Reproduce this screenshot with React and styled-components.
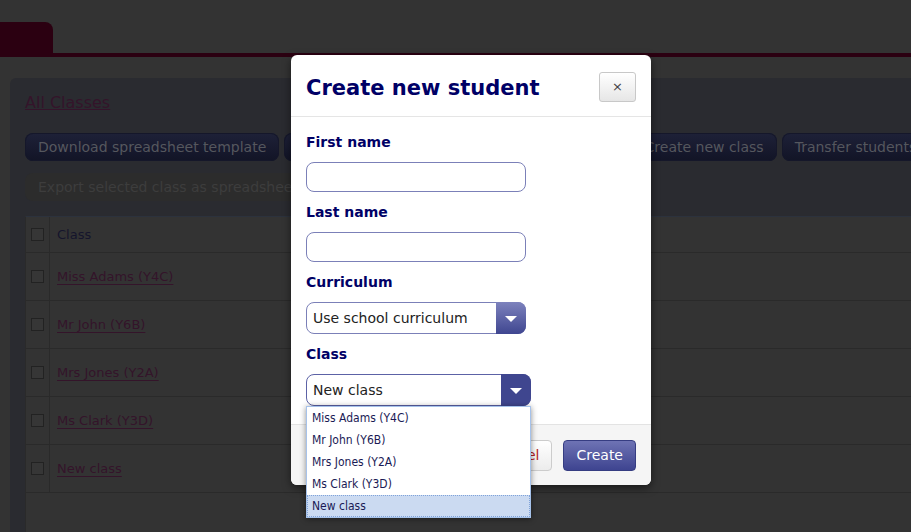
import React from "react";
import styled, { createGlobalStyle } from "styled-components";

const GlobalStyle = createGlobalStyle`
  html, body { margin: 0; padding: 0; }
  body {
    background: #333333;
    overflow: hidden;
    font-family: "DejaVu Sans", Verdana, sans-serif;
    width: 911px;
    height: 532px;
  }
  * { box-sizing: border-box; }
`;

const Page = styled.div`
  position: relative;
  width: 911px;
  height: 532px;
  overflow: hidden;
`;

const TopBar = styled.div`
  height: 57px;
  padding-top: 22px;
  border-bottom: 4px solid #2b0011;
  display: flex;
  align-items: flex-end;
`;

const Tab = styled.div`
  width: 53px;
  height: 31px;
  background: #2b0011;
  border-radius: 0 8px 0 0;
`;

const Content = styled.div`
  padding: 21px 0 0 10px;
`;

const Panel = styled.div`
  width: 1100px;
  height: 460px;
  background: #2a2b30;
  border-radius: 6px 0 0 0;
  padding: 15px 0 0 15px;
  display: flex;
  flex-direction: column;
`;

const PanelLink = styled.a`
  font-size: 16px;
  line-height: 20px;
  color: #34142a;
  text-decoration: underline;
  align-self: flex-start;
`;

const Toolbar = styled.div`
  margin-top: 20px;
  display: flex;
  flex-direction: column;
  gap: 12px;
`;

const ButtonRow = styled.div`
  display: flex;
  gap: 5px;
`;

const PageButton = styled.div`
  height: 28px;
  padding: 0 13px;
  border-radius: 8px;
  font-size: 14px;
  line-height: 28px;
  white-space: nowrap;
  color: ${(p) => (p.$disabled ? "#3d3d3d" : "#55575e")};
  background: ${(p) =>
    p.$disabled ? "#2c2c2c" : "linear-gradient(#1e2138, #121426)"};
  box-shadow: ${(p) => (p.$disabled ? "none" : "inset 0 0 0 1px #15172a")};
`;

const Table = styled.div`
  margin-top: 15px;
  flex: 1;
  background: #333333;
  border-left: 1px solid #2a2a2a;
  border-top: 1px solid #2c323d;
`;

const Row = styled.div`
  display: flex;
  height: ${(p) => (p.$header ? "36px" : "48px")};
  border-bottom: 1px solid #2a2a2a;
`;

const CheckCell = styled.div`
  width: 24px;
  border-right: 1px solid #2a2a2a;
  display: flex;
  align-items: center;
  justify-content: center;
`;

const Check = styled.span`
  width: 13px;
  height: 13px;
  border: 1px solid #222222;
  background: #363636;
`;

const Cell = styled.div`
  display: flex;
  align-items: center;
  padding-left: 7px;
  font-size: 13px;
  color: #15152c;
`;

const RowLink = styled.a`
  color: #34142a;
  text-decoration: underline;
  text-underline-offset: 3px;
`;

/* Modal */

const Modal = styled.div`
  position: absolute;
  left: 291px;
  top: 55px;
  width: 360px;
  background: #ffffff;
  border-radius: 6px;
  box-shadow: 0 3px 9px rgba(0, 0, 0, 0.5);
`;

const ModalHeader = styled.div`
  height: 62px;
  padding: 0 15px;
  border-bottom: 1px solid #e5e5e5;
  display: flex;
  align-items: center;
  justify-content: space-between;
`;

const Title = styled.h3`
  margin: 4px 0 0;
  font-size: 21px;
  font-weight: bold;
  color: #000066;
  line-height: 26px;
`;

const CloseButton = styled.button`
  width: 37px;
  height: 30px;
  padding: 0;
  border: 1px solid #c8c8c8;
  border-radius: 3px;
  background: linear-gradient(#ffffff, #e6e6e6);
  font-family: "DejaVu Sans", sans-serif;
  font-size: 13px;
  color: #444;
  line-height: 28px;
  margin-top: 2px;
`;

const ModalBody = styled.div`
  padding: 15px 15px 18px;
  display: flex;
  flex-direction: column;
`;

const Label = styled.label`
  font-size: 14px;
  font-weight: bold;
  color: #000066;
  line-height: 20px;
  margin-top: ${(p) => (p.$first ? "0" : "10px")};
  margin-bottom: 10px;
`;

const TextInput = styled.input`
  width: 220px;
  height: 30px;
  border: 1px solid #7b80b8;
  border-radius: 8px;
  padding: 0 7px;
  font-family: "DejaVu Sans", sans-serif;
  font-size: 14px;
  outline: none;
`;

const SelectWrap = styled.div`
  position: relative;
  width: ${(p) => p.$w}px;
  height: 32px;
  border: 1px solid ${(p) => (p.$open ? "#5c62a6" : "#7b80b8")};
  border-radius: 8px;
  display: flex;
  background: #fff;
`;

const SelectValue = styled.div`
  flex: 1;
  padding-left: 6px;
  font-size: 14px;
  line-height: 30px;
  color: #222;
  white-space: nowrap;
`;

const SelectArrow = styled.div`
  width: 30px;
  margin: -1px -1px -1px 0;
  border-radius: 0 8px 8px 0;
  background: ${(p) =>
    p.$open ? "#3f468f" : "linear-gradient(#7d82bd, #3f4690)"};
  display: flex;
  align-items: center;
  justify-content: center;
`;

const Triangle = styled.span`
  width: 0;
  height: 0;
  border-left: 6px solid transparent;
  border-right: 6px solid transparent;
  border-top: 6px solid #ffffff;
  margin-top: 1px;
`;

const DropList = styled.ul`
  position: absolute;
  left: -1px;
  top: 31px;
  width: 225px;
  margin: 0;
  padding: 0;
  list-style: none;
  background: #ffffff;
  border: 1px solid #a6c2ea;
  box-shadow: 0 1px 6px rgba(0, 0, 0, 0.45);
  z-index: 2;
`;

const DropItem = styled.li`
  height: 22px;
  line-height: 20px;
  padding-left: 4px;
  font-family: "DejaVu Sans Condensed", "DejaVu Sans", sans-serif;
  font-size: 12px;
  color: #1a1a55;
  background: ${(p) => (p.$active ? "#cbdaf1" : "transparent")};
  border: 1px ${(p) => (p.$active ? "dotted #7fa3da" : "solid transparent")};
  white-space: nowrap;
`;

const ModalFooter = styled.div`
  height: 61px;
  border-top: 1px solid #e3e3e3;
  background: #f5f5f5;
  border-radius: 0 0 6px 6px;
  padding: 0 15px;
  display: flex;
  align-items: center;
  justify-content: flex-end;
  gap: 11px;
`;

const FooterButton = styled.button`
  height: 31px;
  padding: 0 12px;
  border-radius: 4px;
  font-family: "DejaVu Sans", sans-serif;
  font-size: 14px;
  border: 1px solid ${(p) => (p.$primary ? "#363d82" : "#cccccc")};
  color: ${(p) => (p.$primary ? "#ffffff" : "#b3221f")};
  background: ${(p) =>
    p.$primary
      ? "linear-gradient(#6e73b4, #3e4490)"
      : "linear-gradient(#ffffff, #ececec)"};
`;

const classes = [
  "Miss Adams (Y4C)",
  "Mr John (Y6B)",
  "Mrs Jones (Y2A)",
  "Ms Clark (Y3D)",
  "New class",
];

export default function App() {
  return (
    <Page>
      <GlobalStyle />
      <TopBar>
        <Tab />
      </TopBar>
      <Content>
        <Panel>
          <PanelLink href="#">All Classes</PanelLink>
          <Toolbar>
            <ButtonRow>
              <PageButton>Download spreadsheet template</PageButton>
              <PageButton>Upload spreadsheets</PageButton>
              <PageButton>Create new student</PageButton>
              <PageButton>Create new class</PageButton>
              <PageButton>Transfer students</PageButton>
            </ButtonRow>
            <ButtonRow>
              <PageButton $disabled>Export selected class as spreadsheet</PageButton>
            </ButtonRow>
          </Toolbar>
          <Table>
            <Row $header>
              <CheckCell>
                <Check />
              </CheckCell>
              <Cell>Class</Cell>
            </Row>
            {classes.map((c) => (
              <Row key={c}>
                <CheckCell>
                  <Check />
                </CheckCell>
                <Cell>
                  <RowLink href="#">{c}</RowLink>
                </Cell>
              </Row>
            ))}
          </Table>
        </Panel>
      </Content>

      <Modal>
        <ModalHeader>
          <Title>Create new student</Title>
          <CloseButton>×</CloseButton>
        </ModalHeader>
        <ModalBody>
          <Label $first>First name</Label>
          <TextInput />
          <Label>Last name</Label>
          <TextInput />
          <Label>Curriculum</Label>
          <SelectWrap $w={220}>
            <SelectValue>Use school curriculum</SelectValue>
            <SelectArrow>
              <Triangle />
            </SelectArrow>
          </SelectWrap>
          <Label>Class</Label>
          <SelectWrap $w={225} $open>
            <SelectValue>New class</SelectValue>
            <SelectArrow $open>
              <Triangle />
            </SelectArrow>
            <DropList>
              {classes.map((c) => (
                <DropItem key={c} $active={c === "New class"}>
                  {c}
                </DropItem>
              ))}
            </DropList>
          </SelectWrap>
        </ModalBody>
        <ModalFooter>
          <FooterButton>Cancel</FooterButton>
          <FooterButton $primary>Create</FooterButton>
        </ModalFooter>
      </Modal>
    </Page>
  );
}
